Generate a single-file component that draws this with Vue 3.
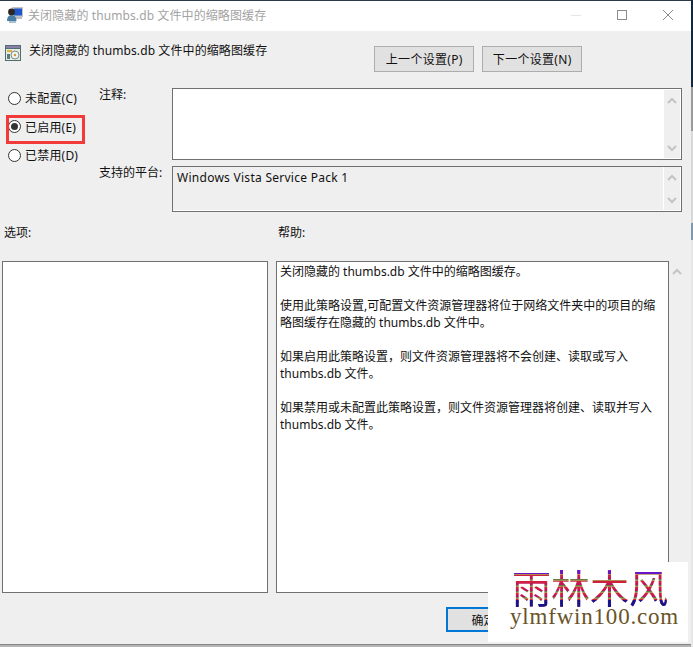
<script setup>
const radios = [
  { label: '未配置(C)', checked: false },
  { label: '已启用(E)', checked: true },
  { label: '已禁用(D)', checked: false }
]
const help = [
  ['关闭隐藏的 thumbs.db 文件中的缩略图缓存。'],
  ['使用此策略设置,可配置文件资源管理器将位于网络文件夹中的项目的缩', '略图缓存在隐藏的 thumbs.db 文件中。'],
  ['如果启用此策略设置\uFF0C则文件资源管理器将不会创建、读取或写入', 'thumbs.db 文件。'],
  ['如果禁用或未配置此策略设置\uFF0C则文件资源管理器将创建、读取并写入', 'thumbs.db 文件。']
]
</script>

<template>
  <div class="screen">
    <div class="dialog">
      <div class="titlebar">
        <svg class="title-icon" width="18" height="18" viewBox="0 0 18 18">
          <rect x="6" y="1" width="11" height="10" fill="#c2c4c8" />
          <rect x="8" y="2.5" width="8" height="7" fill="#1f55c8" />
          <rect x="9" y="11" width="7" height="2" fill="#b8bac0" />
          <circle cx="5.5" cy="6" r="3.4" fill="#2e2620" />
          <path d="M1 15c0-4 2-6 4.5-6s5 2 5 6z" fill="#4a7ea2" />
          <path d="M3 17h7v-2H3z" fill="#a8c2d4" />
        </svg>
        <span class="title-text">关闭隐藏的 thumbs.db 文件中的缩略图缓存</span>
        <div class="win-controls">
          <svg width="12" height="12" viewBox="0 0 12 12"><path d="M1 6.5h10" stroke="#e4e4e4" /></svg>
          <svg width="12" height="12" viewBox="0 0 12 12"><rect x="1.5" y="1.5" width="9" height="9" fill="none" stroke="#8c8c8c" /></svg>
          <svg width="12" height="12" viewBox="0 0 12 12"><path d="M1 1l10 10M11 1L1 11" stroke="#8c8c8c" /></svg>
        </div>
      </div>

      <div class="head">
        <svg class="head-icon" width="16" height="16" viewBox="0 0 16 16">
          <rect x="0" y="0" width="16" height="16" fill="#4f6f78" />
          <rect x="1" y="1" width="14" height="2" fill="#8a7fa8" />
          <rect x="1" y="4" width="14" height="11" fill="#e8ecd8" />
          <rect x="2" y="5" width="5" height="2" fill="#d8b048" />
          <circle cx="10" cy="10" r="4" fill="#f2f2f2" stroke="#7c8c90" />
          <circle cx="10" cy="10" r="1.2" fill="#c89c30" />
          <rect x="2" y="9" width="3" height="5" fill="#5a7a80" />
        </svg>
        <span class="head-text">关闭隐藏的 thumbs.db 文件中的缩略图缓存</span>
        <div class="nav">
          <button class="btn" type="button">上一个设置(P)</button>
          <button class="btn" type="button">下一个设置(N)</button>
        </div>
      </div>

      <div class="settings">
        <div class="radios">
          <div v-for="r in radios" :key="r.label" class="radio">
            <span class="circle"><span v-if="r.checked" class="dot"></span></span>
            <span>{{ r.label }}</span>
          </div>
        </div>
        <div class="field-label first">注释:</div>
        <div class="box note">
          <div class="note-fill"></div>
          <div class="scroll">
            <svg width="10" height="8" viewBox="0 0 10 8"><path d="M1 6l4-4 4 4" fill="none" stroke="#c4c4c4" stroke-width="2" /></svg>
            <svg width="10" height="8" viewBox="0 0 10 8"><path d="M1 2l4 4 4-4" fill="none" stroke="#c4c4c4" stroke-width="2" /></svg>
          </div>
        </div>
        <div class="field-label second">支持的平台:</div>
        <div class="box platform">
          <div class="platform-text">Windows Vista Service Pack 1</div>
          <div class="scroll">
            <svg width="10" height="8" viewBox="0 0 10 8"><path d="M1 6l4-4 4 4" fill="none" stroke="#c4c4c4" stroke-width="2" /></svg>
            <svg width="10" height="8" viewBox="0 0 10 8"><path d="M1 2l4 4 4-4" fill="none" stroke="#c4c4c4" stroke-width="2" /></svg>
          </div>
        </div>
      </div>

      <div class="section-labels">
        <span>选项:</span>
        <span>帮助:</span>
      </div>

      <div class="panes">
        <div class="options"></div>
        <div class="help">
          <p v-for="(para, i) in help" :key="i">
            <span v-for="line in para" :key="line" class="line">{{ line }}</span>
          </p>
        </div>
        <div class="help-scroll">
          <svg width="10" height="8" viewBox="0 0 10 8"><path d="M1 6l4-4 4 4" fill="none" stroke="#c4c4c4" stroke-width="2" /></svg>
        </div>
      </div>

      <div class="footer">
        <button class="btn ok" type="button">确定</button>
      </div>
    </div>
    <div class="strip"></div>

    <div class="highlight"></div>
    <div class="watermark">
      <div class="wm-cn">雨林木风</div>
      <div class="wm-en">ylmfwin100.com</div>
    </div>
  </div>
</template>

<style scoped>
.screen {
  position: relative;
  width: 693px;
  height: 647px;
  display: flex;
  overflow: hidden;
  background: #b4b4b4;
  font-family: "Noto Sans", "Noto Sans CJK SC", sans-serif;
  font-size: 12px;
  color: #111;
}
.dialog {
  width: 691px;
  height: 645px;
  flex: none;
  display: flex;
  flex-direction: column;
  background: #efefef;
  border-top: 1px solid #2c3a48;
  border-bottom: 1px solid #858585;
  box-sizing: border-box;
}
.strip {
  flex: 1;
  background: linear-gradient(#14283c 0 87px, #9a9a9a 87px 131px, #d8d8d8 131px 223px, #7f97ad 223px 240px, #e6e6e6 240px 100%);
}
.titlebar {
  height: 30px;
  flex: none;
  display: flex;
  align-items: center;
  background: #fff;
  padding: 0 0 2px 6px;
  box-sizing: border-box;
}
.title-icon { flex: none; }
.title-text {
  margin-left: 4px;
  color: #a3a3a3;
  white-space: nowrap;
  letter-spacing: 0.1px;
}
.win-controls {
  margin-left: auto;
  margin-right: 17px;
  display: flex;
  gap: 34px;
  align-items: center;
}
.head {
  height: 57px;
  flex: none;
  display: flex;
  align-items: flex-start;
  box-sizing: border-box;
}
.head-icon { flex: none; margin: 14px 0 0 5px; }
.head-text {
  margin: 10px 0 0 8px;
  white-space: nowrap;
  letter-spacing: 0.1px;
}
.nav {
  margin: 15px 0 0 107px;
  display: flex;
  gap: 8px;
}
.btn {
  width: 100px;
  height: 26px;
  padding: 0;
  background: #e1e1e1;
  border: 1px solid #adadad;
  font: inherit;
  color: #111;
  letter-spacing: 0.3px;
}
.settings {
  display: grid;
  grid-template-columns: 99px 73px 510px;
  grid-template-rows: 72px 46px;
  row-gap: 6px;
  flex: none;
}
.radios {
  grid-row: 1 / 3;
  grid-column: 1;
  display: flex;
  flex-direction: column;
  padding: 1px 0 0 8px;
  gap: 10px;
  letter-spacing: 0.2px;
}
.radio {
  display: flex;
  align-items: center;
  gap: 4px;
  height: 18.5px;
  white-space: nowrap;
}
.circle {
  width: 13px;
  height: 13px;
  border: 1px solid #333;
  border-radius: 50%;
  background: #fff;
  box-sizing: border-box;
  display: flex;
  align-items: center;
  justify-content: center;
}
.dot {
  width: 7px;
  height: 7px;
  border-radius: 50%;
  background: #333;
}
.field-label { line-height: 16px; white-space: nowrap; }
.field-label.first { grid-column: 2; grid-row: 1; margin-top: -1px; }
.field-label.second { grid-column: 2; grid-row: 2; margin-top: -1px; }
.box {
  grid-column: 3;
  border: 1px solid #707070;
  box-sizing: border-box;
  display: flex;
  background: #fff;
}
.note { grid-row: 1; padding: 1px; }
.note-fill { flex: 1; }
.platform { grid-row: 2; padding: 0 1px 1px 0; }
.platform-text {
  flex: 1;
  background: #efefef;
  padding: 3px 0 0 4px;
  line-height: 16px;
  border-right: 1px solid #fff;
  letter-spacing: 0.27px;
}
.scroll {
  width: 16px;
  background: #efefef;
  display: flex;
  flex-direction: column;
  justify-content: space-between;
  align-items: center;
  padding: 7px 0 6px;
  box-sizing: border-box;
}
.section-labels {
  display: flex;
  height: 49px;
  flex: none;
  padding: 13px 0 0 4px;
  box-sizing: border-box;
  line-height: 16px;
}
.section-labels span:first-child { width: 274px; }
.panes {
  display: flex;
  height: 332px;
  flex: none;
  padding-left: 2px;
}
.options {
  width: 266px;
  background: #fff;
  border: 1px solid #707070;
  box-sizing: border-box;
}
.help {
  width: 393px;
  margin-left: 8px;
  background: #fff;
  border: 1px solid #707070;
  box-sizing: border-box;
  padding: 1px 3px 0;
  line-height: 17px;
}
.help p { margin: 0 0 17px; }
.line { display: block; white-space: nowrap; }
.help-scroll {
  flex: 1;
  display: flex;
  justify-content: flex-start;
  align-items: flex-start;
  padding: 7px 0 0 3px;
}
.footer {
  flex: none;
  padding: 14px 0 0 446px;
}
.ok {
  width: 75px;
  height: 25px;
  border: 2px solid #0078d7;
  letter-spacing: 0;
}
.highlight {
  position: absolute;
  left: 6px;
  top: 115px;
  width: 79px;
  height: 29px;
  border: 3px solid #f23a3a;
  box-sizing: border-box;
}
.watermark {
  position: absolute;
  left: 488px;
  top: 562px;
  width: 200px;
  height: 80px;
  background: #fff;
}
.wm-cn {
  margin: 3px 0 0 24px;
  width: 158px;
  height: 42px;
  font-family: "Noto Sans CJK SC", sans-serif;
  font-size: 39px;
  line-height: 42px;
  white-space: nowrap;
  color: transparent;
  background:
    linear-gradient(#6a14c8 0 22%, transparent 22% 84%, #16148c 84%),
    repeating-linear-gradient(#c0145a 0 2px, #6a7a40 2px 3px, #b08a50 3px 4px, #d02040 4px 6px);
  -webkit-background-clip: text;
  background-clip: text;
}
.wm-en {
  margin: -3px 0 0 22px;
  font-family: "Liberation Serif", serif;
  font-size: 23px;
  line-height: 26px;
  color: #6a5428;
  white-space: nowrap;
  letter-spacing: 0.8px;
}
</style>
